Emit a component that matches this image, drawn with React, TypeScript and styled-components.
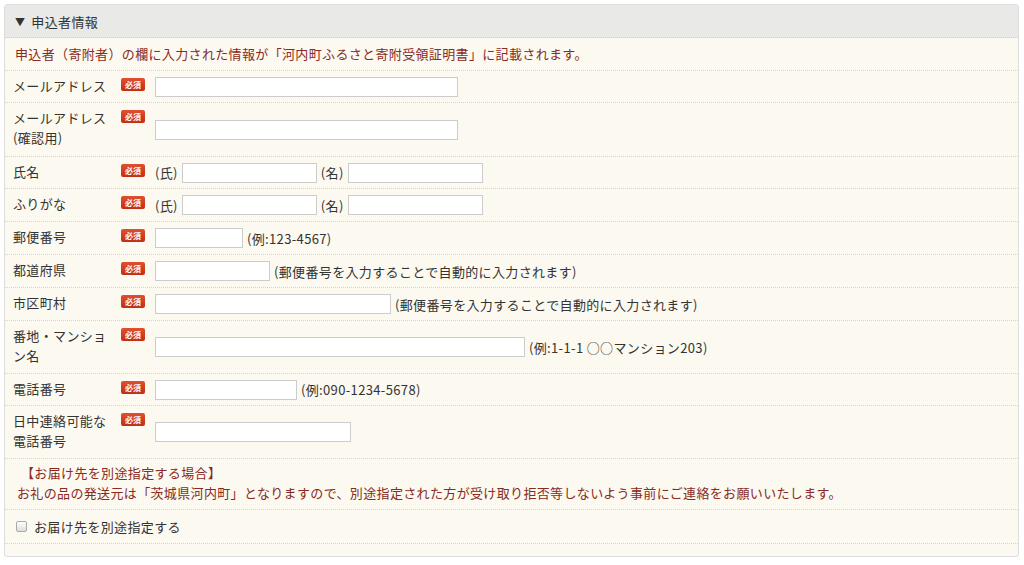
import React from "react";
import styled, { createGlobalStyle } from "styled-components";

const G = createGlobalStyle`
  body { margin: 0; background: #fff; font-family: "Noto Sans CJK JP", "Liberation Sans", sans-serif; font-size: 13px; color: #333; letter-spacing: 0.35px; }
`;
const Panel = styled.div`
  margin: 4px 5px 0 4px; border: 1px solid #ddd; border-radius: 3px; background: #fbf9f0; padding-bottom: 12px;
`;
const Header = styled.div`
  height: 32px; display: flex; align-items: center; padding-left: 10px; background: #e9e9e7; border-bottom: 1px dotted #ccc; font-size: 13px; color: #333;
  span { font-size: 10px; margin-right: 6px; }
`;
const Notice = styled.div`
  color: #8a2a22; padding: 6px 10px; border-bottom: 1px dotted #d6d3c8; line-height: 20px;
`;
const Row = styled.div<{ h: number }>`
  display: flex; align-items: center; min-height: ${p => p.h}px; padding-left: 8px; border-bottom: 1px dotted #d6d3c8; box-sizing: border-box;
`;
const Label = styled.div`
  width: 108px; line-height: 20px; align-self: flex-start; padding-top: 5px;
`;
const Badge = styled.div`
  width: 24px; height: 13px; margin-top: 7px; align-self: flex-start; margin-right: 10px; background: linear-gradient(#e0502f, #c22d15); border-radius: 2px; color: #fff; font-size: 8px; letter-spacing: 0; line-height: 13px; text-align: center; font-weight: bold;
`;
const Input = styled.div<{ w: number }>`
  width: ${p => p.w}px; height: 20px; box-sizing: border-box; border: 1px solid #ccc; background: #fff;
`;
const Txt = styled.span`
  margin: 0 4px; white-space: nowrap;
`;
const CheckRow = styled.div`
  height: 33px; display: flex; align-items: center; padding-left: 11px; border-bottom: 1px dotted #d6d3c8;
`;
const Box = styled.span`
  width: 9px; height: 9px; border: 1px solid #aaa; border-radius: 2px; background: linear-gradient(#fff,#ddd); margin-right: 7px;
`;

const F = ({ label, h, children }: { label: React.ReactNode; h: number; children: React.ReactNode }) => (
  <Row h={h}><Label>{label}</Label><Badge>必須</Badge>{children}</Row>
);

export default function App() {
  return (
    <>
      <G />
      <Panel>
        <Header><span>▼</span>申込者情報</Header>
        <Notice>申込者（寄附者）の欄に入力された情報が「河内町ふるさと寄附受領証明書」に記載されます。</Notice>
        <F label="メールアドレス" h={32}><Input w={303} /></F>
        <F label={<>メールアドレス<br />(確認用)</>} h={54}><Input w={303} /></F>
        <F label="氏名" h={32}><Txt style={{ marginLeft: 0 }}>(氏)</Txt><Input w={135} /><Txt>(名)</Txt><Input w={135} /></F>
        <F label="ふりがな" h={33}><Txt style={{ marginLeft: 0 }}>(氏)</Txt><Input w={135} /><Txt>(名)</Txt><Input w={135} /></F>
        <F label="郵便番号" h={33}><Input w={88} /><Txt>(例:123-4567)</Txt></F>
        <F label="都道府県" h={33}><Input w={115} /><Txt>(郵便番号を入力することで自動的に入力されます)</Txt></F>
        <F label="市区町村" h={33}><Input w={236} /><Txt>(郵便番号を入力することで自動的に入力されます)</Txt></F>
        <F label={<>番地・マンショ<br />ン名</>} h={53}><Input w={370} /><Txt>(例:1-1-1 ○○マンション203)</Txt></F>
        <F label="電話番号" h={32}><Input w={142} /><Txt>(例:090-1234-5678)</Txt></F>
        <F label={<>日中連絡可能な<br />電話番号</>} h={53}><Input w={196} /></F>
        <Notice style={{ padding: "4px 8px 6px 12px" }}>
          <div style={{ paddingLeft: 4 }}>【お届け先を別途指定する場合】</div>
          <div>お礼の品の発送元は「茨城県河内町」となりますので、別途指定された方が受け取り拒否等しないよう事前にご連絡をお願いいたします。</div>
        </Notice>
        <CheckRow><Box />お届け先を別途指定する</CheckRow>
      </Panel>
    </>
  );
}
